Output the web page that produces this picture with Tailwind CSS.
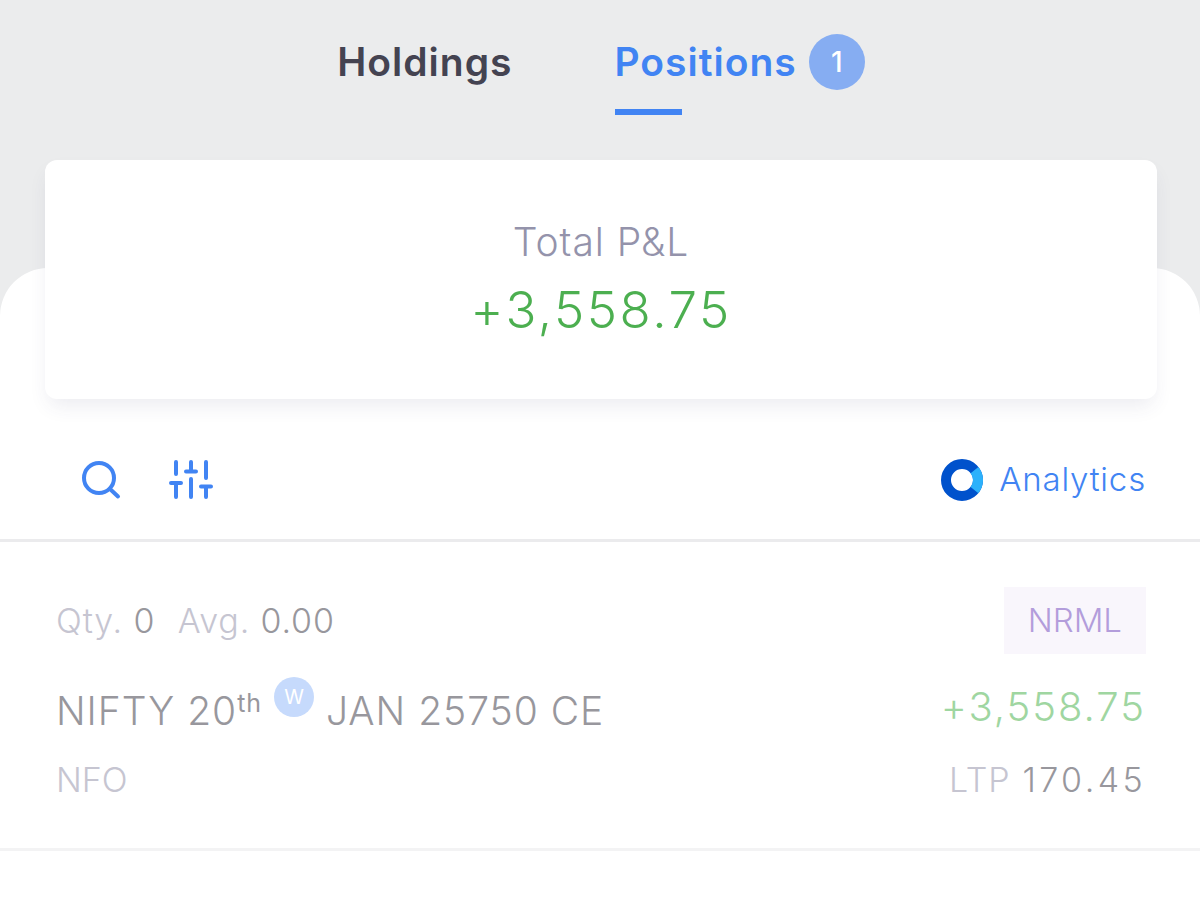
<!DOCTYPE html>
<html lang="en">
<head>
    <meta charset="UTF-8">
    <meta name="viewport" content="width=device-width, initial-scale=1">
    <title>Positions</title>
    <script src="https://cdn.jsdelivr.net/npm/@tailwindcss/browser@4"></script>
</head>
<body class="min-h-screen flex flex-col bg-[#ebeced] font-['Inter',sans-serif]">

<!-- Tabs -->
<nav class="h-[160px] pt-[34px] pl-[2px] flex justify-center gap-[102px]">
    <a href="#holdings" class="h-14 flex items-center text-[39px] font-semibold text-[#444351] tracking-[1px]">Holdings</a>
    <a href="#positions" class="relative h-14 flex items-center gap-3 text-[39px] font-semibold text-[#4184f3] tracking-[1px]">
        Positions
        <span class="size-14 rounded-full bg-[#86adf2] text-white text-[28px] font-medium tracking-normal flex items-center justify-center">1</span>
        <span class="absolute left-0 top-[75px] w-[67px] h-1.5 bg-[#4184f3]"></span>
    </a>
</nav>

<!-- Sheet -->
<main class="flex-1 mt-[108px] bg-white rounded-t-[48px]">
    <section class="ml-[45px] mr-[43px] -mt-[108px] h-[239px] pt-1 bg-white rounded-xl shadow-[0_10px_20px_-4px_rgba(60,60,110,0.10)] flex flex-col items-center justify-center">
        <h2 class="text-[39px] leading-[56px] tracking-wide font-light text-[#9493ab]">Total P&amp;L</h2>
        <p class="text-[51px] leading-[80px] tracking-wider font-light text-[#4caf50]">+3,558.75</p>
    </section>

    <!-- Toolbar -->
    <div class="h-[143px] pt-[22px] pl-20 pr-[54px] flex items-center border-b-3 border-[#ebebed]">
        <button aria-label="Search" class="text-[#4184f3]">
            <svg class="size-11" viewBox="0 0 44 44" fill="none" stroke="currentColor" stroke-width="4" stroke-linecap="round"><circle cx="19" cy="20" r="15"/><path d="M30 31l8 7.500"/></svg>
        </button>
        <button aria-label="Filter" class="ml-11 text-[#4184f3]">
            <svg class="w-[46px] h-11" viewBox="0 0 46 44" fill="none" stroke="currentColor" stroke-width="4" stroke-linecap="round"><path d="M8 4v12M8 25v14M3 25h10M23 4v9M18 13.500h10M23 21v18M38 4v16M38 29v10M33 28.500h10"/></svg>
        </button>
        <a href="#analytics" class="ml-auto flex items-center gap-4 text-[33px] tracking-wide font-light text-[#4184f3]">
            <svg class="size-[42px]" viewBox="0 0 42 42" fill="none" stroke-width="10"><circle cx="21" cy="21" r="16" stroke="#0052cc"/><path d="M33.500 11a16 16 0 0 1 0 20" stroke="#2cb1fb"/></svg>
            Analytics
        </a>
    </div>

    <!-- Position -->
    <article class="pt-[45px] pl-14 pr-[54px] pb-[49px] border-b-3 border-[#f3f3f4] font-light">
        <div class="h-[67px] flex items-center justify-between text-[34px]">
            <p class="tracking-wide text-[#c6c5d1]">Qty. <span class="text-[#98979d]">0</span> <span class="ml-3">Avg.</span> <span class="text-[#98979d]">0.00</span></p>
            <span class="h-full px-6 flex items-center bg-[#f9f6fc] text-[33px] text-[#b39ddb]">NRML</span>
        </div>
        <div class="h-[106px] flex items-center justify-between">
            <h3 class="pt-2 flex items-center text-[39px] tracking-wide text-[#98979d]">
                NIFTY 20<sup class="mt-2 text-[25px] font-normal">th</sup>
                <span class="size-10 mx-3 mb-7 rounded-full bg-[#c6dafc] text-white text-[20px] tracking-normal font-normal flex items-center justify-center">W</span>
                JAN 25750 CE
            </h3>
            <p class="text-[40px] tracking-wider text-[#9fd6a1]">+3,558.75</p>
        </div>
        <div class="flex items-center justify-between text-[34px] leading-[39px]">
            <p class="text-[#c6c5d1]">NFO</p>
            <p class="flex gap-3 tracking-wide text-[#c6c5d1]">LTP <span class="tracking-widest text-[#98979d]">170.45</span></p>
        </div>
    </article>
</main>

</body>
</html>
